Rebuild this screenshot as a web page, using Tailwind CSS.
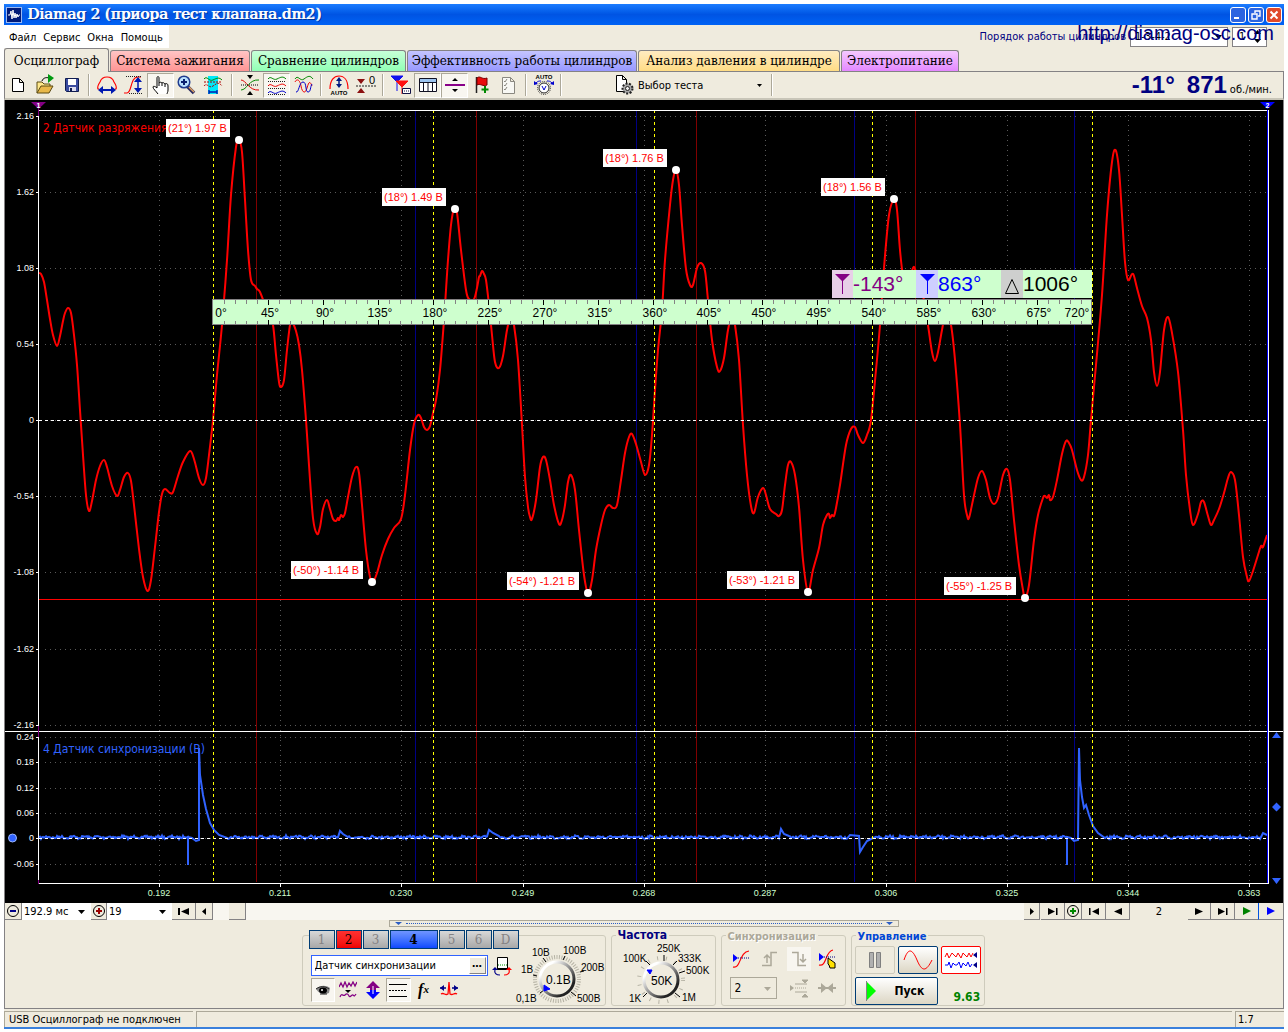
<!DOCTYPE html>
<html lang="ru">
<head>
<meta charset="utf-8">
<title>Diamag 2 (приора тест клапана.dm2)</title>
<script src="https://cdn.jsdelivr.net/npm/@tailwindcss/browser@4"></script>
</head>
<body class="bg-white p-1 text-[11px] leading-none text-black font-['DejaVu_Sans_Condensed','DejaVu_Sans',sans-serif]">
<div class="flex flex-col bg-[#efebde]">

  <header class="flex h-[21px] items-center bg-linear-to-b from-[#1c7cff] via-[#0054e3] to-[#0062f5] pl-[2px] pr-[2px]">
    <svg class="mr-[5px] size-4" viewBox="0 0 16 16"><rect x=".5" y=".5" width="15" height="15" fill="#001a78" stroke="#9db9f0"/><path d="M2 8h2l1-4 1 8 1-9 1 8 1-5 1 5 1-4 1 3 1-2h1" fill="none" stroke="#fff"/></svg>
    <h1 class="flex-1 whitespace-nowrap font-['DejaVu_Serif',serif] text-[15px] text-white [text-shadow:1px_0_0_#ffffff,2px_1px_0_#003399]">Diamag 2 (приора тест клапана.dm2)</h1>
    <div class="flex gap-[2px]">
      <button aria-label="Свернуть" class="flex size-4 items-center justify-center rounded-[3px] border border-white bg-[#2c64e0]"><svg class="size-3" viewBox="0 0 12 12"><path d="M2 9h5" stroke="#fff" stroke-width="2"/></svg></button>
      <button aria-label="Развернуть" class="flex size-4 items-center justify-center rounded-[3px] border border-white bg-[#2c64e0]"><svg class="size-3" viewBox="0 0 12 12"><path d="M5 4V2h5v5H8M2 5h5v5H2z" stroke="#fff" fill="none" stroke-width="1.4"/></svg></button>
      <button aria-label="Закрыть" class="flex size-4 items-center justify-center rounded-[3px] border border-white bg-[#e0492a]"><svg class="size-3" viewBox="0 0 12 12"><path d="M2.500 2.500l7 7M9.500 2.500l-7 7" stroke="#fff" stroke-width="2"/></svg></button>
    </div>
  </header>

  <div class="relative flex h-[23px] items-center justify-between">
    <nav class="flex h-full items-center gap-[7px] bg-white px-[5px] pr-[6px] pt-[2px]">
      <a href="#file">Файл</a><a href="#service">Сервис</a><a href="#windows">Окна</a><a href="#help">Помощь</a>
    </nav>
    <div class="flex items-center gap-[4px] pr-[17px]">
      <label for="order" class="text-[#000080]">Порядок работы цилиндров</label>
      <div class="relative">
        <select id="order" class="block h-[20px] w-[98px] appearance-none border border-[#848284] bg-white pl-[4px] text-[11px]"><option>1-3-4-2</option></select>
        <svg class="pointer-events-none absolute right-[6px] top-[8px] h-[4px] w-[7px]" viewBox="0 0 7 4"><path d="M0 0h7L3.500 4z"/></svg>
      </div>
      <div class="relative">
        <input aria-label="Цилиндр" value="1" class="block h-[20px] w-[35px] border border-[#848284] bg-white pl-[6px] text-[11px]">
        <svg class="pointer-events-none absolute right-[6px] top-[3px] h-[13px] w-[7px]" viewBox="0 0 7 13"><path d="M0 4h7L3.500 0zM0 9h7L3.500 13z"/></svg>
      </div>
    </div>
    <a href="http://diamag-osc.com" class="absolute right-[10px] top-[-3px] font-['Liberation_Sans',sans-serif] text-[20px] leading-[22px] text-[#000080]">http://diamag-osc.com</a>
  </div>

  <nav class="flex h-[24px] items-end gap-[1px] border-b border-[#848284] font-['DejaVu_Serif',serif] text-[12px]">
    <button class="-mb-px h-[24px] w-[105px] rounded-t-[3px] border border-b-0 border-[#848284] bg-[#efebde]">Осциллограф</button>
    <button class="h-[21px] w-[140px] rounded-t-[3px] border border-b-0 border-[#848284] bg-linear-to-b from-[#ffc4c4] to-[#ff9494]">Система зажигания</button>
    <button class="h-[21px] w-[155px] rounded-t-[3px] border border-b-0 border-[#848284] bg-linear-to-b from-[#c6ffd8] to-[#90ffb4]">Сравнение цилиндров</button>
    <button class="h-[21px] w-[230px] rounded-t-[3px] border border-b-0 border-[#848284] bg-linear-to-b from-[#c4c4ff] to-[#9898ff]">Эффективность работы цилиндров</button>
    <button class="h-[21px] w-[202px] rounded-t-[3px] border border-b-0 border-[#848284] bg-linear-to-b from-[#ffebc0] to-[#ffdc84]">Анализ давления в цилиндре</button>
    <button class="h-[21px] w-[118px] rounded-t-[3px] border border-b-0 border-[#848284] bg-linear-to-b from-[#f4c8ff] to-[#e488ff]">Электропитание</button>
  </nav>

  <div class="flex h-[28px] items-center border-b-2 border-l border-r border-[#848284] border-b-[#c8c5b8]">
    <button aria-label="Новый" class="flex h-[25px] w-[26px] items-center justify-center"><svg class="size-[22px]" viewBox="0 0 22 22"><path d="M5.500 4.500h7l4 4v9h-11zM12.500 4.500v4h4" fill="#fff" stroke="#000"/></svg></button>
    <button aria-label="Открыть" class="flex h-[25px] w-[27px] items-center justify-center"><svg class="size-[22px]" viewBox="0 0 22 22"><path d="M3 19V8h5l2 2h6v3" fill="#ffe88c" stroke="#5b4a12"/><path d="M3 19l4-7h12l-4 7z" fill="#e8b84a" stroke="#5b4a12"/><path d="M8 7c1-3 4-4 7-3" fill="none" stroke="#000"/><path d="M14 0v9l6-5z" fill="#009a10"/></svg></button>
    <button aria-label="Сохранить" class="flex h-[25px] w-[27px] items-center justify-center"><svg class="size-[22px]" viewBox="0 0 22 22"><path d="M4.500 4.500h13v13h-12l-1-1z" fill="#3a4ba0" stroke="#101c50"/><path d="M7 5h8v6H7z" fill="#fff"/><path d="M8 13h7v4H8z" fill="#dde"/><path d="M9 14h2v3H9z" fill="#101c50"/></svg></button>
    <i class="mx-[3px] h-[22px] w-[2px] border-l border-[#aca899] bg-white"></i>
    <button aria-label="Ширина" class="flex h-[25px] w-[27px] items-center justify-center"><svg class="size-[22px]" viewBox="0 0 22 22"><path d="M3 15H2c-1-2 0-4 2-7 1-3 3-5 7-5s6 2 7 5c2 3 3 5 2 7h-1" fill="none" stroke="#f00" stroke-width="1.200"/><path d="M5 16h12" stroke="#0018b0" stroke-width="2"/><path d="M2 16l5-4v8zM20 16l-5-4v8z" fill="#0018b0"/></svg></button>
    <button aria-label="Высота" class="flex h-[25px] w-[27px] items-center justify-center"><svg class="size-[22px]" viewBox="0 0 22 22"><path d="M1 19h3c5 0 3-16 11-16h3" fill="none" stroke="#f00" stroke-width="1.200"/><path d="M3 2.500h15M6 19.500h14" stroke="#222" stroke-dasharray="1 1"/><path d="M15 6v10" stroke="#0018b0" stroke-width="1.500"/><path d="M15 3l4 5h-8zM15 19l4-5h-8z" fill="#0018b0"/></svg></button>
    <button aria-label="Рука" class="flex h-[25px] w-[27px] items-center justify-center border border-b-white border-l-[#aca899] border-r-white border-t-[#aca899] bg-[#f8f6f0]"><svg class="size-[22px]" viewBox="0 0 22 22"><path d="M8 20c-2-3-5-5-5-7 0-1 2-1 4 1V4c0-2 2-2 2 0v5c1-1 2-1 3 0 1-1 2 0 3 1 2-1 3 0 3 2v4c0 2-1 3-1 4M9 9v3M12 9v3M15 10v3" fill="#fff" stroke="#000"/></svg></button>
    <button aria-label="Масштаб" class="flex h-[25px] w-[24px] items-center justify-center"><svg class="size-[22px]" viewBox="0 0 22 22"><path d="M12 12l7 7" stroke="#2b2b60" stroke-width="3.500"/><path d="M14 13l5 5" stroke="#e0a060" stroke-width="1.500"/><circle cx="9" cy="8" r="5.800" fill="#b8e0ff" stroke="#203c90" stroke-width="1.500"/><path d="M9 5v6M6 8h6" stroke="#0a2070" stroke-width="2"/></svg></button>
    <button aria-label="Окно" class="flex h-[25px] w-[30px] items-center justify-center"><svg class="size-[22px]" viewBox="0 0 22 22"><path d="M6 2h10v18H6z" fill="#00e8f8"/><path d="M2 5c3-4 5 3 9 1s6-3 9 0" fill="none" stroke="#080"/><path d="M2 12c3-4 5 3 9 0s6-4 9 0M2 8h18" fill="none" stroke="#a00" stroke-dasharray="2 1"/><path d="M7 18h8M7 16v4M15 16v4" stroke="#0018b0" stroke-width="1.300"/></svg></button>
    <i class="mx-[3px] h-[22px] w-[2px] border-l border-[#aca899] bg-white"></i>
    <button aria-label="Совместить" class="flex h-[25px] w-[27px] items-center justify-center"><svg class="size-[22px]" viewBox="0 0 22 22"><path d="M8 1h6l-3 4zM8 21h6l-3-4z"/><path d="M2 6c5 0 8 11 18 10" fill="none" stroke="#d00"/><path d="M2 16c6 0 8-11 18-10" fill="none" stroke="#080"/><path d="M2 11h18" stroke="#000" stroke-dasharray="1 1"/></svg></button>
    <button aria-label="Разделить" class="flex h-[25px] w-[27px] items-center justify-center border border-b-white border-l-[#aca899] border-r-white border-t-[#aca899] bg-[#f8f6f0]"><svg class="size-[22px]" viewBox="0 0 22 22"><g fill="none"><path d="M2 5c3-4 5 2 9 0s6-3 9 0" stroke="#080"/><path d="M2 12c3-4 5 2 9 0s6-3 9 0" stroke="#e00"/><path d="M2 19c3-4 5 2 9 0s6-3 9 0" stroke="#00c"/><path d="M2 7.500h18M2 14.500h18M2 20.500h18" stroke="#222" stroke-dasharray="1 1"/></g></svg></button>
    <button aria-label="Наложить" class="flex h-[25px] w-[27px] items-center justify-center"><svg class="size-[22px]" viewBox="0 0 22 22"><g fill="none"><path d="M2 5c3-5 5 3 9 0s6-4 9 0" stroke="#080"/><path d="M2 8c2-4 5-2 6 4s4 9 6 2 3-7 5-2" stroke="#e00"/><path d="M3 18c3 1 3-10 7-10s2 10 5 10 2-5 4-8" stroke="#00c"/></g></svg></button>
    <i class="mx-[3px] h-[22px] w-[2px] border-l border-[#aca899] bg-white"></i>
    <button aria-label="Авто" class="flex h-[25px] w-[27px] items-center justify-center"><svg class="size-[22px]" viewBox="0 0 22 22"><path d="M2 15C2 6 6 2 11 2s9 4 9 13" fill="none" stroke="#f00" stroke-width="1.200"/><path d="M11 6v6" stroke="#001880" stroke-width="1.500"/><path d="M11 3l3 4H8zM11 14l3-4H8z" fill="#001880"/><text x="11" y="21" text-anchor="middle" font-size="6" font-weight="700" font-family="Liberation Sans">AUTO</text></svg></button>
    <button aria-label="Ноль" class="flex h-[25px] w-[27px] items-center justify-center"><svg class="size-[22px]" viewBox="0 0 22 22"><path d="M2 5h8l-4 5zM2 19h8l-4-5z" fill="#8c1010"/><path d="M1 12h20" stroke="#222" stroke-dasharray="2 1"/><text x="14" y="10" font-size="11" font-family="Liberation Sans">0</text></svg></button>
    <i class="mx-[3px] h-[22px] w-[2px] border-l border-[#aca899] bg-white"></i>
    <button aria-label="Маркеры" class="flex h-[25px] w-[27px] items-center justify-center"><svg class="size-[22px]" viewBox="0 0 22 22"><path d="M1 2h12L7 8zM7 6v11" fill="#11e" stroke="#11e"/><path d="M6 7h12l-6 6zM12 11v9" fill="#f11" stroke="#f11"/><path d="M12.500 14.500h8v5h-8z" fill="#fff" stroke="#114"/><path d="M14 17h5" stroke="#114" stroke-dasharray="1 1"/></svg></button>
    <button aria-label="Таблица" class="flex h-[25px] w-[27px] items-center justify-center border border-b-white border-l-[#aca899] border-r-white border-t-[#aca899] bg-[#f3f0e6]"><svg class="size-[22px]" viewBox="0 0 22 22"><path d="M2.500 4.500h17v13h-17z" fill="#fff" stroke="#112"/><path d="M3 5h16v3H3z" fill="#9cc4f0"/><path d="M2 8.500h18M6.500 8v10M11 8v10M15.500 8v10" stroke="#112"/></svg></button>
    <button aria-label="Разделитель" class="flex h-[25px] w-[27px] items-center justify-center border border-b-white border-l-[#aca899] border-r-white border-t-[#aca899] bg-[#f8f6f0]"><svg class="size-[22px]" viewBox="0 0 22 22"><path d="M1 11h20" stroke="#808" stroke-width="2"/><path d="M8 7h6l-3-3zM8 15h6l-3 3z"/></svg></button>
    <button aria-label="Флаг" class="flex h-[25px] w-[27px] items-center justify-center"><svg class="size-[22px]" viewBox="0 0 22 22"><path d="M5.500 3v16" stroke="#222" stroke-width="1.500"/><path d="M6 4c3-3 5 2 10 0v7c-4 2-7-2-10 0z" fill="#e80c0c" stroke="#700"/><path d="M14 12v7M10.500 15.500h7" stroke="#080" stroke-width="2"/></svg></button>
    <button aria-label="Список" class="flex h-[25px] w-[27px] items-center justify-center"><svg class="size-[22px]" viewBox="0 0 22 22"><path d="M4.500 3.500h8l4 4v12h-12zM12.500 3.500v4h4" fill="#f8f8f4" stroke="#8a8880"/><path d="M6 7l1 1 2-3M6 11l1 1 2-3M6 15l1 1 2-3" fill="none" stroke="#8a8880"/></svg></button>
    <i class="mx-[3px] h-[22px] w-[2px] border-l border-[#aca899] bg-white"></i>
    <button aria-label="Авто регулятор" class="flex h-[25px] w-[27px] items-center justify-center"><svg class="size-[22px]" viewBox="0 0 22 22"><text x="11" y="5" text-anchor="middle" font-size="6" font-weight="700" font-family="Liberation Sans">AUTO</text><circle cx="11" cy="14" r="6.500" fill="none" stroke="#333" stroke-dasharray="1 1"/><circle cx="11" cy="14" r="5" fill="#fff" stroke="#222"/><path d="M9 12l2 4 2-4" fill="none" stroke="#00c"/><path d="M3 9c2-2 3-2 5-2M19 9c-2-2-3-2-5-2" fill="none" stroke="#00c"/><path d="M1 11V7l4 3zM21 11V7l-4 3z" fill="#00c"/></svg></button>
    <i class="mx-[3px] h-[22px] w-[2px] border-l border-[#aca899] bg-white"></i>
    <button class="ml-[48px] flex h-[25px] w-[155px] items-center gap-[3px]">
      <svg class="size-[22px]" viewBox="0 0 22 22"><path d="M3.500 1.500h6l4 4v12h-10zM9.500 1.500v4h4" fill="#fff" stroke="#000"/><circle cx="14.500" cy="14.500" r="5" fill="#a8a8a8" stroke="#222" stroke-width="2" stroke-dasharray="2 1.500"/><circle cx="14.500" cy="14.500" r="2" fill="#eee" stroke="#222"/></svg>
      <span class="flex-1 text-left">Выбор теста</span>
      <svg class="mr-[6px] h-[3px] w-[5px]" viewBox="0 0 5 3"><path d="M0 0h5L2.500 3z"/></svg>
    </button>
    <i class="mx-[3px] h-[22px] w-[2px] border-l border-[#aca899] bg-white"></i>
    <div class="ml-auto flex items-baseline pr-[11px] text-[#000080]">
      <strong class="font-['Liberation_Sans',sans-serif] text-[24px]">-11°</strong>
      <strong class="ml-[12px] mr-[3px] font-['Liberation_Sans',sans-serif] text-[24px]">871</strong>
      <span class="text-black">об./мин.</span>
    </div>
  </div>

  <main class="border-x border-[#848284] bg-black">
    <svg id="scope" class="block h-auto w-full" viewBox="5 100 1278 803" font-family="Liberation Sans, sans-serif">
      <g id="grid" stroke="#5a5a5a" stroke-dasharray="1 4" shape-rendering="crispEdges"></g>
      <g shape-rendering="crispEdges">
        <path d="M256.500 111V882M476.500 111V882M696.500 111V882M915.500 111V882" stroke="#800000"/>
        <path d="M415.500 111V882M636.500 111V882M854.500 111V882M1074.500 111V882" stroke="#000084"/>
      </g>
      <path id="vacuum" fill="none" stroke="#f00" stroke-width="2" stroke-linejoin="round"/>
      <path id="sync" fill="none" stroke="#3163ff" stroke-width="2"/>
      <g shape-rendering="crispEdges" fill="none">
        <path d="M39 420.500H1268M39 838.500H1268" stroke="#fff" stroke-dasharray="3 3"/>
        <path d="M213.500 110V882M433.500 110V882M654.500 110V882M872.500 110V882M1092.500 110V882" stroke="#ff0" stroke-dasharray="3 3"/>
        <path d="M39 599.500H1268" stroke="#f00"/>
        <path d="M38.500 110V884M38 110.500H1269M1268.500 110V884M38 883.500H1269M5 731.500H1283" stroke="#fff"/>
        <path d="M1267.500 110V883" stroke="#00f"/>
        <path d="M38.500 108V116M38.500 725V738M38.500 880V884" stroke="#840084"/>
        <path id="axisTicks" stroke="#fff"/>
      </g>
      <path d="M31 102h15l-7.500 7z" fill="#840084"/><path d="M1260 102h15l-7.500 7z" fill="#00f"/>
      <g fill="#fff" font-size="7" font-weight="700" text-anchor="middle"><text x="38.500" y="108">1</text><text x="1267.500" y="108">2</text></g>
      <g id="yLabels" fill="#fff" font-size="9" text-anchor="end"></g>
      <g id="xLabels" fill="#ceffce" font-size="9" text-anchor="middle"></g>
      <g font-size="12" font-family="DejaVu Sans Condensed, DejaVu Sans, sans-serif"><text x="43" y="132" fill="#f00">2 Датчик разряжения</text><text x="43" y="753" fill="#3163ff">4 Датчик синхронизации (В)</text></g>
      <g fill="#3163ff"><circle cx="12.500" cy="838" r="4" stroke="#9cb8ff"/><path d="M1272 738h9l-4.500-6zM1272 878h9l-4.500 6zM1272 807l4.500-4.500 4.500 4.500-4.500 4.500z"/></g>
      <g id="marks" font-size="11"></g>
      <g shape-rendering="crispEdges">
        <rect x="832" y="270" width="260" height="28" fill="#ceffce"/>
        <rect x="832" y="270" width="21" height="28" fill="#e7cfe7"/><rect x="916" y="270" width="22" height="28" fill="#cecfff"/><rect x="1001" y="270" width="22" height="28" fill="#cecfce"/>
        <rect x="212.500" y="299.500" width="879" height="25" fill="#ceffce" stroke="#848284"/>
        <path id="minorTicks" stroke="#848284"/><path id="majorTicks" stroke="#000"/>
      </g>
      <path d="M835 274h15l-7 7v13h-1v-13z" fill="#840084"/><path d="M920 274h15l-7 7v13h-1v-13z" fill="#00f"/><path d="M1005.500 293.500h13l-6.500-14z" fill="none" stroke="#000"/>
      <g font-size="21"><text x="853" y="291" fill="#840084">-143°</text><text x="938" y="291" fill="#00f">863°</text><text x="1023" y="291">1006°</text></g>
      <g id="degrees" font-size="12"></g>
    </svg>
  </main>

  <div class="flex h-[17px] border-x border-[#848284]">
    <button aria-label="Уменьшить" class="flex w-[17px] items-center justify-center border-b border-r border-[#848284]"><svg class="size-[14px]" viewBox="0 0 14 14"><circle cx="7" cy="7" r="5.500" fill="none" stroke="#000"/><path d="M4 7h6" stroke="#008" stroke-width="2"/></svg></button>
    <div class="relative">
      <select aria-label="Длительность" class="block h-[17px] w-[69px] appearance-none bg-white pl-[2px] text-[11px]"><option>192.9 мс</option></select>
      <svg class="pointer-events-none absolute right-[6px] top-[7px] h-[4px] w-[7px]" viewBox="0 0 7 4"><path d="M0 0h7L3.500 4z"/></svg>
    </div>
    <button aria-label="Увеличить" class="flex w-[16px] items-center justify-center border-b border-r border-[#848284]"><svg class="size-[14px]" viewBox="0 0 14 14"><circle cx="7" cy="7" r="5.500" fill="none" stroke="#000"/><path d="M4 7h6M7 4v6" stroke="#900" stroke-width="2"/></svg></button>
    <div class="relative">
      <select aria-label="Масштаб времени" class="block h-[17px] w-[65px] appearance-none bg-white pl-[2px] text-[11px]"><option>19</option></select>
      <svg class="pointer-events-none absolute right-[6px] top-[7px] h-[4px] w-[7px]" viewBox="0 0 7 4"><path d="M0 0h7L3.500 4z"/></svg>
    </div>
    <button aria-label="В начало" class="flex w-[24px] items-center justify-center border-b border-r border-[#848284]"><svg class="h-[7px] w-[11px]" viewBox="0 0 11 7"><path d="M0 0h2v7H0zM11 0v7L3 3.500z"/></svg></button>
    <button aria-label="Назад" class="flex w-[17px] items-center justify-center border-b border-r border-[#848284]"><svg class="h-[7px] w-[4px]" viewBox="0 0 4 7"><path d="M4 0v7L0 3.500z"/></svg></button>
    <div class="flex flex-1 bg-[#f8f6f0] pl-[16px]"><div class="w-[17px] border-b border-r border-[#848284] bg-[#efebde]"></div></div>
    <button aria-label="Вперёд" class="flex w-[16px] items-center justify-center border-b border-r border-[#848284]"><svg class="h-[7px] w-[4px]" viewBox="0 0 4 7"><path d="M0 0v7l4-3.500z"/></svg></button>
    <button aria-label="В конец" class="ml-[1px] flex w-[24px] items-center justify-center border-b border-r border-[#848284]"><svg class="h-[7px] w-[10px]" viewBox="0 0 10 7"><path d="M0 0v7l7-3.500zM8 0h1.500v7H8z"/></svg></button>
    <button aria-label="Добавить" class="flex w-[17px] items-center justify-center border-b border-r border-[#848284]"><svg class="size-[14px]" viewBox="0 0 14 14"><circle cx="7" cy="7" r="5.500" fill="none" stroke="#000"/><path d="M4 7h6M7 4v6" stroke="#080" stroke-width="2"/></svg></button>
    <button aria-label="Первый кадр" class="flex w-[24px] items-center justify-center border-b border-r border-[#848284]"><svg class="h-[7px] w-[10px]" viewBox="0 0 10 7"><path d="M0 0h1.500v7H0zM10 0v7L3 3.500z"/></svg></button>
    <button aria-label="Предыдущий кадр" class="flex w-[24px] items-center justify-center border-b border-r border-[#848284]"><svg class="h-[7px] w-[8px]" viewBox="0 0 8 7"><path d="M8 0v7L0 3.500z"/></svg></button>
    <span class="flex w-[58px] items-center justify-center">2</span>
    <button aria-label="Следующий кадр" class="flex w-[23px] items-center justify-center border-b border-r border-[#848284]"><svg class="h-[7px] w-[8px]" viewBox="0 0 8 7"><path d="M0 0v7l8-3.500z"/></svg></button>
    <button aria-label="Последний кадр" class="flex w-[24px] items-center justify-center border-b border-r border-[#848284]"><svg class="h-[7px] w-[10px]" viewBox="0 0 10 7"><path d="M0 0v7l7-3.500zM8 0h1.500v7H8z"/></svg></button>
    <button aria-label="Воспроизвести" class="flex w-[24px] items-center justify-center border-b border-r border-b-[#848284] border-r-[#0054e3]"><svg class="h-[8px] w-[8px]" viewBox="0 0 8 8"><path d="M0 0v8l8-4z" fill="#008200"/></svg></button>
    <button aria-label="Быстро" class="flex w-[24px] items-center justify-center border-b border-[#848284]"><svg class="h-[8px] w-[8px]" viewBox="0 0 8 8"><path d="M0 0v8l8-4z" fill="#00f"/></svg></button>
  </div>

  <section class="flex flex-col items-center border-x border-b border-[#848284] pb-[2px]">
    <div class="flex h-[7px] w-[510px] items-center justify-between border border-[#aca899] px-[5px]">
      <svg class="h-[3px] w-[7px]" viewBox="0 0 7 3"><path d="M0 0h7L3.500 3z" fill="#2a5cc4"/></svg>
      <div class="mx-[4px] flex-1 border-t border-dotted border-[#2a5cc4]"></div>
      <svg class="h-[3px] w-[7px]" viewBox="0 0 7 3"><path d="M0 0h7L3.500 3z" fill="#2a5cc4"/></svg>
    </div>
    <div class="mt-[3px] flex items-end gap-[5px] pr-[2px]">

      <div class="relative flex h-[76px] w-[304px] pl-[7px]">
        <div class="absolute inset-x-0 bottom-0 top-[5px] rounded-[3px] border border-[#cecbbc]"></div>
        <div class="relative flex w-[210px] shrink-0 flex-col">
          <div class="flex h-[19px] gap-px bg-[#efebde] font-['DejaVu_Serif',serif] text-[12px] text-[#848284]">
            <button class="w-[26px] border border-[#003c74] bg-linear-to-b from-[#d8d8d8] to-[#a8a8a8]">1</button>
            <button class="w-[26px] border border-[#003c74] bg-linear-to-b from-[#ff3030] to-[#f00000] text-black">2</button>
            <button class="w-[26px] border border-[#003c74] bg-linear-to-b from-[#d8d8d8] to-[#a8a8a8]">3</button>
            <button class="w-[48px] border border-[#003c74] bg-linear-to-b from-[#7094ff] to-[#1048ff] font-bold text-black">4</button>
            <button class="w-[26px] border border-[#003c74] bg-linear-to-b from-[#d8d8d8] to-[#a8a8a8]">5</button>
            <button class="w-[26px] border border-[#003c74] bg-linear-to-b from-[#d8d8d8] to-[#a8a8a8]">6</button>
            <button class="w-[26px] border border-[#003c74] bg-linear-to-b from-[#d8d8d8] to-[#a8a8a8]">D</button>
          </div>
          <div class="mt-[6px] flex h-[21px] items-center gap-[4px] pl-[2px]">
            <div class="flex h-[21px] w-[177px] items-center border border-[#3163ff] bg-white">
              <input aria-label="Имя канала" value="Датчик синхронизации" class="h-full min-w-0 flex-1 pl-[3px] text-[11px]">
              <button aria-label="Выбрать датчик" class="mr-[1px] h-[17px] w-[17px] border border-b-[#848284] border-l-white border-r-[#848284] border-t-white bg-[#efebde] pb-[5px] font-bold leading-none">…</button>
            </div>
            <svg class="size-[20px]" viewBox="0 0 20 20"><path d="M5.500 1.500h10v11h-10z" fill="#fff" stroke="#000"/><path d="M6 9h9" stroke="#090" stroke-dasharray="1 1"/><path d="M5 12h11v2H5z"/><path d="M8 19c-4 0-6-2-5-5" fill="none" stroke="#008" stroke-width="1.200"/><path d="M0 14h6l-3-3z" fill="#008"/><path d="M12 19c4 0 6-2 5-5" fill="none" stroke="#f00" stroke-width="1.200"/><path d="M14 14h6l-3-3z" fill="#f00"/></svg>
          </div>
          <div class="mt-[1px] flex h-[25px] items-center gap-[1px] pl-[2px]">
            <button aria-label="Видимость" class="flex h-[24px] w-[24px] items-center justify-center border border-b-white border-l-[#aca899] border-r-white border-t-[#aca899] bg-[#f8f6f0]"><svg class="size-[18px]" viewBox="0 0 18 18"><path d="M2 8c4-4 10-4 14-1l-1 5c-4 2-9 2-13-4z" fill="#888"/><ellipse cx="9" cy="9.500" rx="4" ry="3"/><path d="M2 8c4-3 9-3 13 0M6 13h7" stroke="#222" fill="none"/><circle cx="8" cy="9" r="1" fill="#fff"/></svg></button>
            <button aria-label="Фильтр" class="flex h-[24px] w-[24px] items-center justify-center"><svg class="size-[18px]" viewBox="0 0 18 18"><path d="M0 6l2-4 2 4 2-5 2 5 2-4 2 3 2-4 2 4 2-4M1 16c2-5 3 0 5-2s3-1 4 1 3-2 4-1 1 2 3-1" fill="none" stroke="#840084" stroke-width="1.300"/><path d="M6 9h6l-3 3z"/></svg></button>
            <button aria-label="Инверсия" class="flex h-[24px] w-[24px] items-center justify-center"><svg class="size-[18px]" viewBox="0 0 18 18"><path d="M9 0l7 7h-4v2H6V7H2z" fill="#840084"/><path d="M9 18l7-7h-4V9H6v2H2z" fill="#00f"/><path d="M9 5v8" stroke="#fff"/></svg></button>
            <button aria-label="Линии" class="flex h-[24px] w-[25px] items-center justify-center border border-b-white border-l-[#aca899] border-r-white border-t-[#aca899] bg-[#f8f6f0]"><svg class="size-[18px]" viewBox="0 0 18 18"><path d="M0 3.500h18M0 15.500h18" stroke="#000"/><path d="M0 9.500h18" stroke="#000" stroke-dasharray="2 1"/></svg></button>
            <button aria-label="Функция" class="flex h-[24px] w-[24px] items-center justify-center font-['Liberation_Serif',serif] text-[16px] font-bold italic">f<span class="text-[11px]">x</span></button>
            <button aria-label="Сдвиг" class="flex h-[24px] w-[24px] items-center justify-center"><svg class="size-[18px]" viewBox="0 0 18 18"><path d="M0 7h6M12 7h6" stroke="#008" stroke-width="1.500"/><path d="M4 4v6L0 7zM14 4v6l4-3z" fill="#008"/><path d="M1 13c3-2 4 2 7 0l1-12 1 12c3 2 4-2 7 0" fill="none" stroke="#f00" stroke-width="1.300"/></svg></button>
          </div>
        </div>
        <svg class="relative -ml-1 h-[76px] w-[90px] shrink-0" viewBox="515 931 90 76" font-size="10" font-family="Liberation Sans, sans-serif">
          <defs><linearGradient id="rim" x1="0" y1="0" x2="1" y2="1"><stop offset=".2" stop-color="#fff"/><stop offset=".8" stop-color="#222"/></linearGradient></defs>
          <circle cx="557" cy="980" r="22" fill="none" stroke="#b5b2a4" stroke-width="4" stroke-dasharray="1 1.500"/>
          <path d="M543 959l3 4M565 957l-2 4M533 976l4 1M584 972l-4 1M540 994l4-3M576 997l-5-4" stroke="#000"/>
          <circle cx="557" cy="980" r="17" fill="#efebde" stroke="url(#rim)" stroke-width="3"/>
          <path d="M544 986l6 4-6 2z" fill="#00f" stroke="#00f"/>
          <text x="532" y="957">10В</text><text x="563" y="955">100В</text><text x="521" y="974">1В</text><text x="581" y="972">200В</text><text x="516" y="1003">0,1В</text><text x="577" y="1003">500В</text>
          <text x="546" y="985" font-size="12">0.1В</text>
        </svg>
      </div>

      <div class="relative h-[71px] w-[105px] rounded-[3px] border border-[#cecbbc]">
        <h2 class="absolute left-[4px] top-[-7px] bg-[#efebde] px-[2px] text-[12px] font-bold text-[#000080]">Частота</h2>
        <svg class="h-[69px] w-[103px]" viewBox="612 936 103 69" font-size="10" font-family="Liberation Sans, sans-serif">
          <circle cx="661" cy="980" r="22" fill="none" stroke="#b5b2a4" stroke-width="4" stroke-dasharray="1 8"/>
          <path d="M646 961l4 4M664 955v6M677 961l-4 4M685 971l-6 2M643 997l4-4M680 997l-5-4" stroke="#000"/>
          <circle cx="661" cy="980" r="17" fill="#efebde" stroke="url(#rim)" stroke-width="3"/>
          <path d="M647 970h5l-2 4z" fill="#00f" stroke="#00f"/>
          <text x="657" y="952">250K</text><text x="623" y="962">100K</text><text x="678" y="962">333K</text><text x="686" y="974">500K</text><text x="629" y="1002">1K</text><text x="682" y="1001">1M</text>
          <text x="651" y="985" font-size="12">50K</text>
        </svg>
      </div>

      <div class="relative flex h-[71px] w-[125px] flex-col rounded-[3px] border border-[#cecbbc] pl-[7px] pt-[10px]">
        <h2 class="absolute left-[4px] top-[-5px] bg-[#efebde] px-[2px] text-[11px] font-bold text-[#aca899] [text-shadow:1px_1px_0_#fff]">Синхронизация</h2>
        <div class="flex h-[26px] items-center gap-[5px]">
          <button aria-label="Уровень" class="flex size-[24px] items-center justify-center"><svg class="size-[20px]" viewBox="0 0 20 20"><path d="M2 18c8 2 6-15 16-16" fill="none" stroke="#f00" stroke-width="1.200"/><path d="M2 5v8l5-4z" fill="#00f"/><path d="M7 9h11" stroke="#008" stroke-dasharray="1 1"/></svg></button>
          <button aria-label="Фронт" class="flex size-[24px] items-center justify-center"><svg class="size-[20px]" viewBox="0 0 20 20"><path d="M2 16.500h9V3.500h6" fill="none" stroke="#aca899" stroke-width="1.500"/><path d="M7 7v7M4 9l3-3 3 3" fill="none" stroke="#aca899" stroke-width="1.500"/></svg></button>
          <button aria-label="Спад" class="flex size-[24px] items-center justify-center bg-[#f8f6f0]"><svg class="size-[20px]" viewBox="0 0 20 20"><path d="M3 3.500h6v13h8" fill="none" stroke="#aca899" stroke-width="1.500"/><path d="M14 5v8M11 10l3 3 3-3" fill="none" stroke="#aca899" stroke-width="1.500"/></svg></button>
          <button aria-label="Указать уровень" class="flex size-[24px] items-center justify-center"><svg class="size-[20px]" viewBox="0 0 20 20"><path d="M1 16c8 2 6-14 14-15" fill="none" stroke="#f00" stroke-width="1.200"/><path d="M1 4v8l5-4z" fill="#00f"/><path d="M6 8h12" stroke="#008" stroke-dasharray="1 1"/><path d="M10 9l7 5v5h-5l-1-3-1-1z" fill="#ffe000" stroke="#000"/></svg></button>
        </div>
        <div class="mt-[5px] flex items-center gap-[13px]">
          <div class="relative">
            <select aria-label="Канал синхронизации" class="ml-[1px] block h-[22px] w-[47px] appearance-none border border-[#aca899] bg-[#efebde] pl-[4px] text-[12px]"><option>2</option></select>
            <svg class="pointer-events-none absolute right-[6px] top-[10px] h-[4px] w-[7px]" viewBox="0 0 7 4"><path d="M0 0h7L3.500 4z" fill="#aca899"/></svg>
          </div>
          <svg class="size-[20px]" viewBox="0 0 20 20"><path d="M5 6h12M5 14h12M12 2h6l-3 3zM12 19h6l-3-3z" stroke="#aca899" fill="#aca899"/><path d="M5 10h12" stroke="#aca899" stroke-dasharray="1 1"/><path d="M0 7v6l4-3z" fill="#aca899"/></svg>
          <svg class="-ml-[6px] size-[20px]" viewBox="0 0 20 20"><path d="M1 10h18" stroke="#aca899" stroke-width="2"/><path d="M4 5v10l6-5zM16 5v10l-6-5z" fill="#aca899"/></svg>
        </div>
      </div>

      <div class="relative h-[71px] w-[134px] rounded-[3px] border border-[#cecbbc] pl-[3px] pt-[10px]">
        <h2 class="absolute left-[4px] top-[-5px] bg-[#efebde] px-[2px] text-[11px] font-bold text-[#0046d5]">Управление</h2>
        <div class="flex gap-[3px]">
          <button aria-label="Пауза" class="flex h-[28px] w-[40px] items-center justify-center rounded-[2px] border border-[#cecbbc]"><svg class="h-[16px] w-[12px]" viewBox="0 0 12 16"><path d="M.5.500h4v15h-4zM7.500.500h4v15h-4z" fill="#b0b0b0" stroke="#808080"/></svg></button>
          <button aria-label="Синусоида" class="flex h-[28px] w-[40px] items-center justify-center rounded-[2px] border border-[#003c74] bg-linear-to-b from-white to-[#dcd6c4]"><svg class="h-[22px] w-[30px]" viewBox="0 0 30 22"><path d="M1 11C5-1 9-1 14 11s9 12 15 0" fill="none" stroke="#f00"/></svg></button>
          <button aria-label="Лента" class="flex h-[28px] w-[40px] items-center justify-center rounded-[2px] border border-[#f00] bg-white"><svg class="h-[22px] w-[34px]" viewBox="0 0 34 22"><path d="M1 8l2-4 2 5 3-5 2 2 2 2 2-4 3 5 2-5 2 2 2 2 2-4 2 4 2-4" fill="none" stroke="#f00"/><path d="M1 16h3l1-3 2 6 2-5 2 2h2l2-3 2 6 2-5 3 3 2-4 2 5 2-3" fill="none" stroke="#00f"/><path d="M33 3v6l-4-3zM33 13v6l-4-3z" fill="#008"/></svg></button>
        </div>
        <div class="mt-[3px] flex items-center">
          <button class="flex h-[28px] w-[83px] items-center gap-[19px] rounded-[2px] border border-[#003c74] bg-linear-to-b from-white to-[#dcd6c4] pl-[10px] text-[12px] font-bold"><svg class="h-[20px] w-[10px]" viewBox="0 0 10 20"><path d="M0 0v20l10-10z" fill="#0f0"/><path d="M.5 0v20" stroke="#848284"/></svg>Пуск</button>
          <span class="ml-[16px] mt-[12px] text-[12px] font-bold text-[#008200]">9.63</span>
        </div>
      </div>
    </div>
  </section>

  <footer class="mt-[2px] flex h-[18px] gap-[3px] border-b-2 border-[#3a80dc]">
    <div class="flex w-[189px] items-center border-l border-t border-[#aca899] pl-[4px]">USB Осциллограф не подключен</div>
    <div class="flex-1 border-l border-t border-[#aca899]"></div>
    <div class="flex w-[49px] items-center border-l border-t border-[#aca899] pl-[2px]">1.7</div>
  </footer>
</div>

<script>
const $ = id => document.getElementById(id);

// Vacuum sensor trace, as x,y pairs in chart units.
const vacuum = [39,273,41,274,44,282,47,300,50,319,53,335,57,346,60,336,63,321,65,313,68,308,71,313,74,335,77,365,80,410,83,455,86,495,89,511,92,501,96,480,100,466,104,460,107,467,112,486,117,496,120,490,124,477,128,473,131,481,134,505,139,549,143,577,147.5,591,151,580,155,547,159,512,162,494,165,489,170,493,173,492,178,476,183,462,190,451,194,459,199,478,203,485,206,478,209,455,213,420,217,375,222,325,227,260,231,195,236,147,239,140,242,152,245,200,248,250,251,280,255,286,257,289,260,292,265,305,269,315,273,325,276,355,279,382,281,387,284,380,287,350,290,325,292,322,296,331,299,345,302,370,306,420,309,465,313,518,317,534,320,527,323,509,327,500,330,509,333,519,336,521,338,518,339,520,341,515,343,517,345,513,348,497,352,477,356,467,359,473,362,505,366,550,370,577,373,582,377,573,382,555,388,539,394,528,401,519,405,495,410,450,414,424,418,415,421,418,424,427,427,430,430,426,433,413,436,400,440,370,444,320,446,290,448,260,451,225,454,209,457,213,461,250,466,290,469,299,474,299,477,288,479,277,480,276,482,271,484,274,486,280,489,305,492,335,495,362,499,368,503,356,507,330,511,315,514,325,518,360,522,425,525,477,528,507,530,517,532,519,536,500,540,467,543,457,546,460,550,480,554,505,559,524,562,520,565,505,568,482,571,475,575,490,579,530,584,575,588,593,592,580,596,550,601,525,605,510,609,505,613,508,617,505,621,480,625,453,629,437,632,434,636,444,641,462,645,475,649,465,652,435,655,390,658,350,662,310,665,260,670,205,673,180,676,170,679,185,682,225,686,269,690,285,693,285,697,268,701,263,705,271,708,300,712,340,717,367,720,371,724,358,728,330,732,315,735,325,739,360,743,425,747,475,751,506,754,513,758,497,763,488,766,495,770,509,776,514,779,516,782,510,785,485,788,465,791,462,795,475,799,507,803,560,808,592,813,570,819,548,823,525,827,515,829,514,830,518,832,515,834,516,836,508,840,485,846,445,851,429,855,427,858,435,863,443,867,435,871,420,876,370,880,325,884,268,889,215,894,200,897,210,900,250,903,275,908,285,913,268,916,272,924,300,928,325,932,352,935,361,938,352,942,330,946,312,951,325,955,360,960,425,964,495,967,515,969,518,973,500,978,478,982,471,986,480,990,498,994,504,998,498,1003,475,1007,469,1010,480,1014,520,1019,565,1023,590,1025,598,1029,585,1034,540,1038,515,1043,498,1045,496,1047,498,1049,495,1050,500,1053,497,1057,480,1062,454,1066,441,1069,443,1072,450,1077,470,1081,480,1084,477,1088,455,1091,420,1096,365,1102,295,1107,215,1112,162,1115.5,150,1119,170,1122,215,1125,262,1128,280,1132,274,1134,276,1137,288,1142,306,1147,318,1151,340,1154,372,1157,386,1160,372,1164,330,1168,317,1172,333,1178,372,1183,430,1186,475,1190,510,1193,525,1198,514,1201,502,1204,502,1208,516,1211,525,1214,520,1219,509,1224,493,1228,478,1231,472,1235,480,1239,515,1243,557,1247,577,1249,581,1253,571,1258,555,1261,546,1263,547,1267,535];

function smooth(a) {
  const p = [];
  for (let i = 0; i < a.length; i += 2) p.push([a[i], a[i + 1]]);
  let d = `M${p[0]}`;
  for (let i = 0; i < p.length - 1; i++) {
    const p0 = p[i - 1] || p[i], p1 = p[i], p2 = p[i + 1], p3 = p[i + 2] || p2;
    d += `C${p1[0] + (p2[0] - p0[0]) / 6},${p1[1] + (p2[1] - p0[1]) / 6} ${p2[0] - (p3[0] - p1[0]) / 6},${p2[1] - (p3[1] - p1[1]) / 6} ${p2}`;
  }
  return d;
}
$('vacuum').setAttribute('d', smooth(vacuum));

// Sync sensor: noisy base line between the pulses.
let seed = 7;
const rand = () => (seed = (seed * 16807) % 2147483647) / 2147483647;
const noise = (a, b) => {
  let s = '';
  for (let x = a; x < b; x += 1) s += `L${x},${837.2 + Math.sin(x * 0.5) * 0.7 + (rand() - 0.5) * 2.4}`;
  return s;
};
$('sync').setAttribute('d', 'M39,837' + noise(40, 187) + 'L188,837V865V837L192,838L196,841L199,840V748L200,775L203,795L206,809L210,823L214,830L219,835L227,838' +
  noise(228, 339) + 'L340,831L343,834L348,837' + noise(349, 488) + 'L489,830L493,833L499,836' + noise(500, 780) + 'L781,829L784,834L789,836' + noise(790, 848) +
  'L850,835L859,836L860,852L863,847L867,841L873,838' + noise(875, 1066) + 'L1067,837V865V837L1071,838L1074,841L1078,840L1079,748L1080,780L1082,797L1084,808L1086,805L1089,815L1093,826L1098,833L1105,838' +
  noise(1107, 1262) + 'L1263,833L1267,835');

const ys = [[116,'2.16'],[192,'1.62'],[268,'1.08'],[344,'0.54'],[420,'0'],[496,'-0.54'],[572,'-1.08'],[649,'-1.62'],[725,'-2.16'],[737,'0.24'],[762,'0.18'],[788,'0.12'],[813,'0.06'],[838,'0'],[864,'-0.06']];
const xs = [[159,'0.192'],[280,'0.211'],[401,'0.230'],[523,'0.249'],[644,'0.268'],[765,'0.287'],[886,'0.306'],[1007,'0.325'],[1128,'0.344'],[1249,'0.363']];
$('grid').innerHTML = ys.map(([y]) => `<path d="M45 ${y}.5H1267"/>`).join('') + xs.map(([x]) => `<path d="M${x}.5 115V882"/>`).join('');
$('axisTicks').setAttribute('d', ys.map(([y]) => `M36 ${y}.5h3`).join('') + xs.map(([x]) => `M${x}.5 884v3`).join(''));
$('yLabels').innerHTML = ys.map(([y, t]) => `<text x="34" y="${y + 3}">${t}</text>`).join('');
$('xLabels').innerHTML = xs.map(([x, t]) => `<text x="${x}" y="896">${t}</text>`).join('');

// Peak callouts: box x, y, width; point x, y; text.
$('marks').innerHTML = [[166,119,64,239,140,'(21°) 1.97 В'],[382,188,64,455,209,'(18°) 1.49 В'],[603,149,64,676,170,'(18°) 1.76 В'],[821,178,64,894,199,'(18°) 1.56 В'],
  [291,561,72,372,582,'(-50°) -1.14 В'],[507,572,72,588,593,'(-54°) -1.21 В'],[727,571,72,808,592,'(-53°) -1.21 В'],[944,577,72,1025,598,'(-55°) -1.25 В']]
  .map(([x, y, w, cx, cy, t]) => `<rect x="${x}" y="${y}" width="${w}" height="18" fill="#fff"/><circle cx="${cx}" cy="${cy}" r="4" fill="#fff"/><text x="${x + 2}" y="${y + 13}" fill="#f00">${t}</text>`).join('');

// Degree ruler: 0 to 720, a tick every 9, a long one every 45.
let minor = '', major = '', deg = '';
for (let i = 1; i < 80; i++) {
  const x = Math.round(213 + i * 879 / 80) + .5;
  if (i % 5) minor += `M${x} 300v4M${x} 321v3`; else major += `M${x} 300v5M${x} 320v5`;
}
for (let a = 0; a <= 720; a += 45) {
  const x = a === 0 ? 221 : a === 720 ? 1077 : Math.round(215 + a * 879 / 720);
  deg += `<text x="${x}" y="317" text-anchor="middle">${a}°</text>`;
}
$('minorTicks').setAttribute('d', minor);
$('majorTicks').setAttribute('d', major);
$('degrees').innerHTML = deg;
</script>
</body>
</html>
